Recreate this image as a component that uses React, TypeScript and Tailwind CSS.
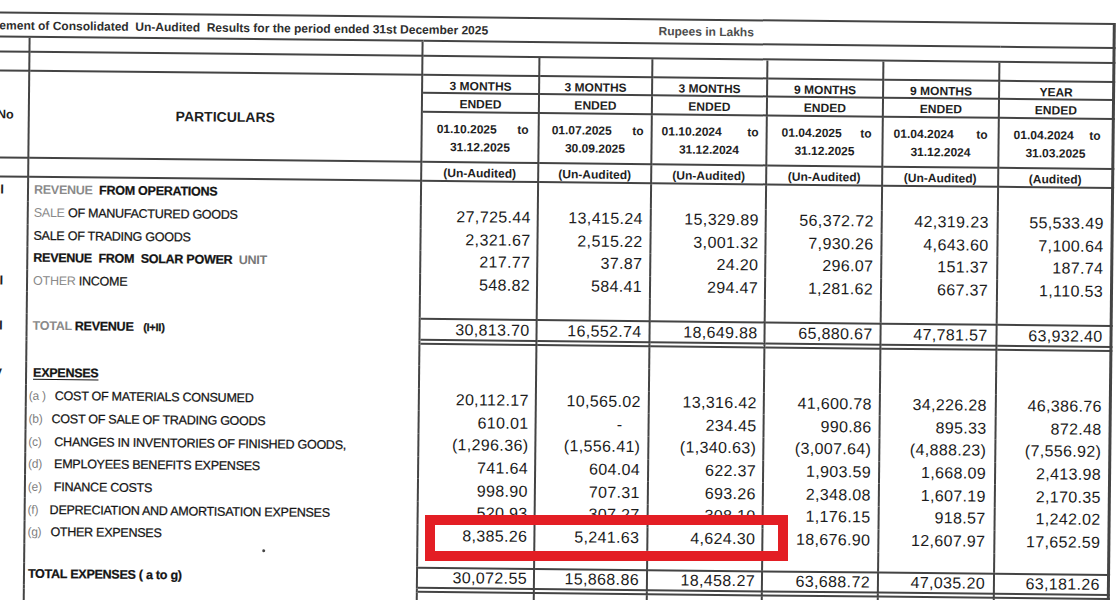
import type { ReactNode } from "react";

// Scanned results sheet. The whole sheet sits slightly tilted, the red marker box is drawn on top of it.
const GRID = "grid grid-cols-[67px_393px_117px_113px_115px_116px_116px_115px]";
const BC = "border-[#444]";
const NUM_PR = ["pr-[6px]", "pr-[7px]", "pr-[6px]", "pr-[7px]", "pr-[8px]", "pr-[7px]"];

type Head = { t: string; from: string; to: string; st: string; pad: string };

const HEAD: Head[] = [
  { t: "3 MONTHS", from: "01.10.2025", to: "31.12.2025", st: "(Un-Audited)", pad: "pl-[14px] pr-[9px]" },
  { t: "3 MONTHS", from: "01.07.2025", to: "30.09.2025", st: "(Un-Audited)", pad: "pl-[12px] pr-[7px]" },
  { t: "3 MONTHS", from: "01.10.2024", to: "31.12.2024", st: "(Un-Audited)", pad: "pl-[9px] pr-[7px]" },
  { t: "9 MONTHS", from: "01.04.2025", to: "31.12.2025", st: "(Un-Audited)", pad: "pl-[14px] pr-[10px]" },
  { t: "9 MONTHS", from: "01.04.2024", to: "31.12.2024", st: "(Un-Audited)", pad: "pl-[10px] pr-[10px]" },
  { t: "YEAR", from: "01.04.2024", to: "31.03.2025", st: "(Audited)", pad: "pl-[14px] pr-[11px]" },
];

type Line = {
  h: string;
  sr?: string;
  pl?: string;
  label?: ReactNode;
  vals?: string[];
  kind?: "total" | "double";
};

function Letter({ c, w }: { c: string; w: string }) {
  return <span className={`inline-block ${w} text-[12px] text-[#7f7f7f] [-webkit-text-stroke:0px]`}>{c}</span>;
}

const GRAY = "text-[#8a8a8a] [-webkit-text-stroke:0px]";

const LINES: Line[] = [
  {
    h: "h-[24px]",
    sr: "I",
    label: (
      <span className="font-bold whitespace-pre">
        <span className={GRAY}>REVENUE</span>  FROM OPERATIONS
      </span>
    ),
  },
  {
    h: "h-[22.5px]",
    label: (
      <span>
        <span className={GRAY}>SALE</span> OF MANUFACTURED GOODS
      </span>
    ),
    vals: ["27,725.44", "13,415.24", "15,329.89", "56,372.72", "42,319.23", "55,533.49"],
  },
  {
    h: "h-[22.5px]",
    label: "SALE OF TRADING GOODS",
    vals: ["2,321.67", "2,515.22", "3,001.32", "7,930.26", "4,643.60", "7,100.64"],
  },
  {
    h: "h-[22.5px]",
    label: (
      <span className="font-bold whitespace-pre">
        REVENUE  FROM  SOLAR POWER  <span className="text-[#777] [-webkit-text-stroke:0px]">UNIT</span>
      </span>
    ),
    vals: ["217.77", "37.87", "24.20", "296.07", "151.37", "187.74"],
  },
  {
    h: "h-[22.5px]",
    sr: "II",
    label: (
      <span>
        <span className={GRAY}>OTHER</span> INCOME
      </span>
    ),
    vals: ["548.82", "584.41", "294.47", "1,281.62", "667.37", "1,110.53"],
  },
  { h: "h-[22px]" },
  {
    h: "h-[23px]",
    sr: "III",
    kind: "total",
    label: (
      <span className="font-bold whitespace-pre">
        <span className={GRAY}>TOTAL</span> REVENUE   <span className="text-[11px]">(I+II)</span>
      </span>
    ),
    vals: ["30,813.70", "16,552.74", "18,649.88", "65,880.67", "47,781.57", "63,932.40"],
  },
  { h: "h-[4px]", kind: "double" },
  { h: "h-[21px]" },
  {
    h: "h-[22.7px]",
    sr: "IV",
    pl: "pl-[6px]",
    label: <span className="font-bold underline underline-offset-2">EXPENSES</span>,
  },
  {
    h: "h-[22.7px]",
    pl: "pl-[2px]",
    label: (
      <span>
        <Letter c="(a )" w="w-[26px]" />
        COST OF MATERIALS CONSUMED
      </span>
    ),
    vals: ["20,112.17", "10,565.02", "13,316.42", "41,600.78", "34,226.28", "46,386.76"],
  },
  {
    h: "h-[22.7px]",
    pl: "pl-[2px]",
    label: (
      <span>
        <Letter c="(b)" w="w-[23px]" />
        COST OF SALE OF TRADING GOODS
      </span>
    ),
    vals: ["610.01", "-", "234.45", "990.86", "895.33", "872.48"],
  },
  {
    h: "h-[22.7px]",
    pl: "pl-[2px]",
    label: (
      <span>
        <Letter c="(c)" w="w-[26px]" />
        CHANGES IN INVENTORIES OF FINISHED GOODS,
      </span>
    ),
    vals: ["(1,296.36)", "(1,556.41)", "(1,340.63)", "(3,007.64)", "(4,888.23)", "(7,556.92)"],
  },
  {
    h: "h-[22.7px]",
    pl: "pl-[2px]",
    label: (
      <span>
        <Letter c="(d)" w="w-[26px]" />
        EMPLOYEES BENEFITS EXPENSES
      </span>
    ),
    vals: ["741.64", "604.04", "622.37", "1,903.59", "1,668.09", "2,413.98"],
  },
  {
    h: "h-[22.7px]",
    pl: "pl-[2px]",
    label: (
      <span>
        <Letter c="(e)" w="w-[26px]" />
        FINANCE COSTS
      </span>
    ),
    vals: ["998.90", "707.31", "693.26", "2,348.08", "1,607.19", "2,170.35"],
  },
  {
    h: "h-[22.7px]",
    pl: "pl-[2px]",
    label: (
      <span>
        <Letter c="(f)" w="w-[22px]" />
        DEPRECIATION AND AMORTISATION EXPENSES
      </span>
    ),
    vals: ["520.93", "307.27", "308.10", "1,176.15", "918.57", "1,242.02"],
  },
  {
    h: "h-[22.7px]",
    pl: "pl-[2px]",
    label: (
      <span>
        <Letter c="(g)" w="w-[23px]" />
        OTHER EXPENSES
      </span>
    ),
    vals: ["8,385.26", "5,241.63", "4,624.30", "18,676.90", "12,607.97", "17,652.59"],
  },
  { h: "h-[19.4px]" },
  {
    h: "h-[22px]",
    kind: "total",
    pl: "pl-[3px]",
    label: <span className="font-bold">TOTAL EXPENSES ( a to g)</span>,
    vals: ["30,072.55", "15,868.86", "18,458.27", "63,688.72", "47,035.20", "63,181.26"],
  },
  { h: "h-[4px]", kind: "double" },
  { h: "h-[40px]" },
];

function Header() {
  const cell = `border-b-2 ${BC}`;
  return (
    <div className={`${GRID} grid-rows-[24px_15px_19px_18px_19px_50px_19px] border-t-2 ${BC}`}>
      <div className={`col-span-2 flex items-center whitespace-pre ${cell} pl-[13px] pt-[1px] text-[12px] font-bold text-[#2e2e2e]`}>
        Statement of Consolidated  Un-Audited  Results for the period ended 31st December 2025
      </div>
      <div className={`col-span-5 flex items-center justify-center ${cell} pr-[12px] text-[12px] font-bold text-[#4d4d4d]`}>
        Rupees in Lakhs
      </div>
      <div className={`${cell} border-r-[3px]`} />

      <div className={`${cell} border-r-2`} />
      <div className={`${cell} border-r-2`} />
      <div className={`col-span-6 ${cell} border-r-[3px]`} />

      {Array.from({ length: 8 }).map((_, i) => (
        <div key={i} className={`${cell} ${i === 7 ? "border-r-[3px]" : "border-r-2"}`} />
      ))}

      <div className={`row-span-3 flex items-center justify-end ${cell} border-r-2 pr-[14px] pt-[2px] text-[12.5px] font-bold`}>
        Sr. No
      </div>
      <div className={`row-span-3 flex items-center justify-center ${cell} border-r-2 pt-[2px] text-[14px] font-bold`}>
        PARTICULARS
      </div>
      {HEAD.map((c, i) => (
        <div
          key={`t${i}`}
          className={`flex items-center justify-center ${cell} ${i === 5 ? "border-r-[3px]" : "border-r-2"} pt-[3px] text-[12px] font-bold`}
        >
          {c.t}
        </div>
      ))}
      {HEAD.map((_, i) => (
        <div
          key={`e${i}`}
          className={`flex items-center justify-center ${cell} ${i === 5 ? "border-r-[3px]" : "border-r-2"} pt-[3px] text-[12px] font-bold`}
        >
          ENDED
        </div>
      ))}
      {HEAD.map((c, i) => (
        <div
          key={`d${i}`}
          className={`flex flex-col justify-center ${cell} ${i === 5 ? "border-r-[3px]" : "border-r-2"} pt-[2px] text-[12px] font-bold leading-[18px]`}
        >
          <div className={`flex justify-between ${c.pad}`}>
            <span>{c.from}</span>
            <span>to</span>
          </div>
          <div className="text-center">{c.to}</div>
        </div>
      ))}
      <div className={`${cell} border-r-2`} />
      <div className={`${cell} border-r-2`} />
      {HEAD.map((c, i) => (
        <div
          key={`s${i}`}
          className={`flex items-center justify-center ${cell} ${i === 5 ? "border-r-[3px]" : "border-r-2"} pt-[3px] text-[12px] font-bold`}
        >
          {c.st}
        </div>
      ))}
    </div>
  );
}

function BodyLine({ line }: { line: Line }) {
  const { h, sr, label, vals, kind, pl = "pl-[5px]" } = line;
  const numBorder = kind === "total" ? "border-t-2 border-b-2" : kind === "double" ? "border-b-2" : "";
  return (
    <div className={`${GRID} ${h}`}>
      <div className={`flex items-center justify-end border-r-2 ${BC} pr-[23px] text-[13px] font-bold`}>{sr}</div>
      <div
        className={`flex items-center whitespace-nowrap border-r-2 ${BC} ${pl} pt-[1px] text-[12.5px] tracking-[-0.25px] text-[#141414] [-webkit-text-stroke:0.25px_#141414]`}
      >
        {label}
      </div>
      {NUM_PR.map((pr, i) => (
        <div
          key={i}
          className={`flex items-center justify-end ${i === 5 ? "border-r-[3px]" : "border-r-2"} ${numBorder} ${BC} ${pr} text-[16px] leading-none tracking-[0.35px] text-[#1c1c1c]`}
        >
          {vals?.[i] === "-" ? <span className="mr-[18px]">-</span> : vals?.[i]}
        </div>
      ))}
    </div>
  );
}

export default function App() {
  return (
    <div className="relative h-[600px] w-[1120px] overflow-hidden bg-white font-['Liberation_Sans',Arial,sans-serif] text-[#1f1f1f]">
      <div className="relative -ml-[36px] w-[1152px] origin-top-left rotate-[0.6deg] pt-[11px]">
        <Header />
        {LINES.map((l, i) => (
          <BodyLine key={i} line={l} />
        ))}
        <span className="absolute left-[304px] top-[546px] size-[3px] rounded-full bg-[#444]" />
      </div>
      <div className="absolute left-[425px] top-[515px] h-[46px] w-[363px] border-[10px] border-[#e31e24]" />
    </div>
  );
}
